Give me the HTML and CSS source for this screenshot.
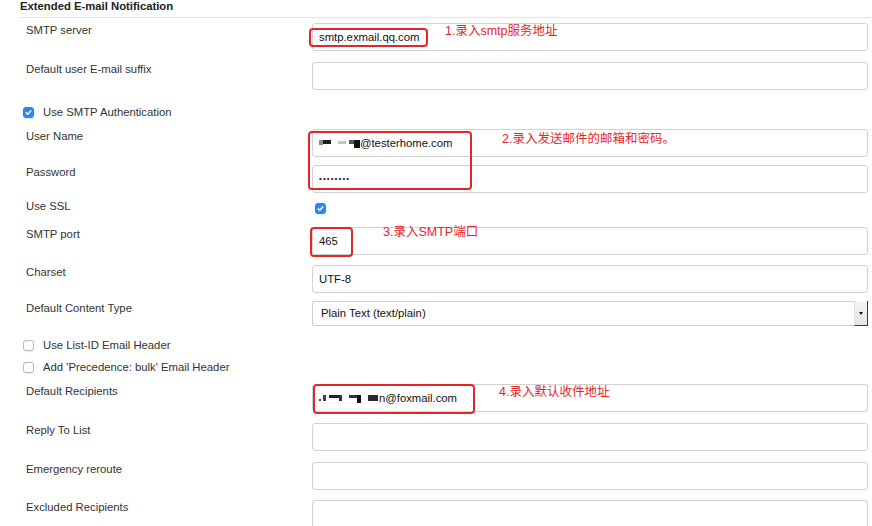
FILE: index.html
```html
<!DOCTYPE html>
<html lang="en">
<head>
    <meta charset="UTF-8">
    <meta name="viewport" content="width=device-width, initial-scale=1.0">
    <title>Extended E-mail Notification</title>
    <link rel="stylesheet" href="styles.css">
</head>
<body>
    <div class="page">
        <div class="section">
            <div class="section-title">Extended E-mail Notification</div>

            <div class="form">
                <div class="row first">
                    <div class="label">SMTP server</div>
                    <div class="input">smtp.exmail.qq.com</div>
                </div>
                <div class="row">
                    <div class="label">Default user E-mail suffix</div>
                    <div class="input"></div>
                </div>
                <div class="check-row">
                    <span class="check checked"><svg viewBox="0 0 11 11"><path d="M2.6 5.7 L4.6 7.7 L8.4 3.3" /></svg></span>
                    <span>Use SMTP Authentication</span>
                </div>
                <div class="row after-checks">
                    <div class="label">User Name</div>
                    <div class="input">
                        <!-- blurred part of the address -->
                        <span class="mosaic">
                            <i class="b1"></i><i class="b2"></i><i class="gap"></i><i class="b3"></i><i class="b4"></i><i class="b5"></i>
                        </span>@testerhome.com
                    </div>
                </div>
                <div class="row near">
                    <div class="label">Password</div>
                    <div class="input"><span class="dots">••••••••</span></div>
                </div>
                <div class="row ssl">
                    <div class="label">Use SSL</div>
                    <div class="field">
                        <span class="check checked"><svg viewBox="0 0 11 11"><path d="M2.6 5.7 L4.6 7.7 L8.4 3.3" /></svg></span>
                    </div>
                </div>
                <div class="row near">
                    <div class="label">SMTP port</div>
                    <div class="input">465</div>
                </div>
                <div class="row snug">
                    <div class="label">Charset</div>
                    <div class="input">UTF-8</div>
                </div>
                <div class="row near">
                    <div class="label">Default Content Type</div>
                    <div class="select">
                        <span class="select-text">Plain Text (text/plain)</span>
                        <span class="select-btn"><span class="arrow"></span></span>
                    </div>
                </div>
                <div class="check-row after-select">
                    <span class="check"></span>
                    <span>Use List-ID Email Header</span>
                </div>
                <div class="check-row pair">
                    <span class="check"></span>
                    <span>Add 'Precedence: bulk' Email Header</span>
                </div>
                <div class="row after-checks">
                    <div class="label">Default Recipients</div>
                    <div class="input">
                        <span class="mosaic">
                            <i class="c0"></i><i class="c1"></i><i class="c2"></i><i class="c3"></i><i class="gap"></i><i class="c4"></i><i class="c5"></i><i class="gap"></i><i class="c6"></i>
                        </span>n@foxmail.com
                    </div>
                </div>
                <div class="row">
                    <div class="label">Reply To List</div>
                    <div class="input"></div>
                </div>
                <div class="row">
                    <div class="label">Emergency reroute</div>
                    <div class="input"></div>
                </div>
                <div class="row snug">
                    <div class="label">Excluded Recipients</div>
                    <div class="input"></div>
                </div>
            </div>
        </div>

        <!-- red markup drawn over the screenshot -->
        <div class="mark mark-1"></div>
        <div class="note note-1">1.录入smtp服务地址</div>
        <div class="mark mark-2"></div>
        <div class="note note-2">2.录入发送邮件的邮箱和密码。</div>
        <div class="mark mark-3"></div>
        <div class="note note-3">3.录入SMTP端口</div>
        <div class="mark mark-4"></div>
        <div class="note note-4">4.录入默认收件地址</div>
    </div>
</body>
</html>
```

FILE: styles.css
```css
body {
    margin: 0;
    font-family: "Liberation Sans", Arial, Helvetica, sans-serif;
    font-size: 11.3px;
    color: #333;
    background: #fff;
    overflow: hidden;
}
.page {
    position: relative;
    height: 526px;
}
.section {
    padding-left: 20px;
}
.section-title {
    font-weight: bold;
    color: #222;
    line-height: 12px;
    padding-bottom: 5px;
    border-bottom: 1px solid #e4e4e4;
}
.form {
    padding-right: 4px;
}
.row {
    display: flex;
    margin-top: 11px;
}
.row.first {
    margin-top: 5px;
}
.row.near {
    margin-top: 8px;
}
.row.snug {
    margin-top: 10px;
}
.row.after-checks {
    margin-top: 6px;
}
.row.ssl {
    margin-top: 6px;
    height: 20px;
}
.label {
    width: 286px;
    flex: none;
    padding-left: 6px;
    line-height: 14px;
}
.field {
    padding-top: 4px;
    padding-left: 3px;
}
.input {
    flex: 1;
    height: 28px;
    box-sizing: border-box;
    border: 1px solid #d2d2d2;
    border-radius: 3px;
    padding-left: 6px;
    line-height: 26px;
    color: #111;
    display: flex;
    align-items: center;
    white-space: nowrap;
}
.dots {
    font-size: 8px;
    letter-spacing: 1.1px;
    color: #222;
}
.mosaic {
    display: inline-flex;
    align-items: center;
    height: 12px;
}
.mosaic i {
    display: inline-block;
}
.mosaic .gap { width: 7px; }
.mosaic .b1 { width: 4px; height: 5px; background: #8a8a8a; margin-top: -2px; }
.mosaic .b2 { width: 8px; height: 4px; background: #1e1e1e; margin-top: -3px; }
.mosaic .b3 { width: 8px; height: 3px; background: #c4c4c4; margin-top: -2px; margin-right: 3px; }
.mosaic .b4 { width: 5px; height: 4px; background: #555; margin-top: -2px; }
.mosaic .b5 { width: 6px; height: 8px; background: #111; margin-top: 1px; }
.mosaic .c0 { width: 2px; height: 2px; background: #444; margin-right: 2px; margin-top: 3px; }
.mosaic .c1 { width: 3px; height: 6px; background: #444; margin-right: 3px; }
.mosaic .c2 { width: 10px; height: 3px; background: #222; margin-top: -3px; }
.mosaic .c3 { width: 3px; height: 6px; background: #333; margin-top: -1px; }
.mosaic .c4 { width: 8px; height: 3px; background: #333; margin-top: -3px; }
.mosaic .c5 { width: 4px; height: 8px; background: #111; margin-top: 1px; }
.mosaic .c6 { width: 10px; height: 6px; background: #2a2a2a; margin-right: 1px; }

.select {
    flex: 1;
    height: 25px;
    box-sizing: border-box;
    border: 1px solid #d2d2d2;
    border-right: 0;
    border-radius: 2px 0 0 2px;
    display: flex;
    align-items: stretch;
    color: #111;
}
.select-text {
    flex: 1;
    padding-left: 8px;
    line-height: 23px;
}
.select-btn {
    width: 12px;
    margin-top: -1px;
    margin-bottom: -1px;
    background: linear-gradient(#f6f6f6, #e4e4e4);
    border-left: 1px solid #e0e0e0;
    border-right: 1px solid #3a3a3a;
    border-bottom: 1px solid #3a3a3a;
    display: flex;
    align-items: center;
    justify-content: center;
}
.arrow {
    width: 0;
    height: 0;
    border-left: 2.5px solid transparent;
    border-right: 2.5px solid transparent;
    border-top: 3px solid #111;
}

.check-row {
    display: flex;
    align-items: center;
    height: 22px;
    margin-top: 11px;
    padding-left: 3px;
}
.check-row.after-select {
    margin-top: 8px;
}
.check-row.pair {
    margin-top: 0;
}
.check-row .check {
    margin-right: 9px;
}
.check {
    display: inline-block;
    width: 11px;
    height: 11px;
    box-sizing: border-box;
    border: 1px solid #b9b9b9;
    border-radius: 3px;
    background: #fff;
    box-shadow: 0 0.5px 1px rgba(0, 0, 0, 0.08);
}
.check.checked {
    border-color: #2f7fea;
    background: #3187f0;
}
.check svg {
    display: block;
    width: 9px;
    height: 9px;
}
.check svg path {
    fill: none;
    stroke: #fff;
    stroke-width: 1.6;
    stroke-linecap: round;
    stroke-linejoin: round;
}

.mark {
    position: absolute;
    box-sizing: border-box;
    border: 2px solid #e4262a;
    border-radius: 4px;
}
.mark-1 { left: 309px; top: 28px; width: 119px; height: 19px; }
.mark-2 { left: 308px; top: 131px; width: 164px; height: 59px; }
.mark-3 { left: 310px; top: 227px; width: 43px; height: 30px; }
.mark-4 { left: 313px; top: 384px; width: 162px; height: 30px; }

.note {
    position: absolute;
    font-family: "Liberation Sans", "Noto Sans CJK SC", sans-serif;
    font-size: 12.5px;
    line-height: 14px;
    color: #e4262a;
    white-space: nowrap;
}
.note-1 { left: 445px; top: 24px; }
.note-2 { left: 502px; top: 132px; }
.note-3 { left: 383px; top: 225px; }
.note-4 { left: 499px; top: 385px; }
```
